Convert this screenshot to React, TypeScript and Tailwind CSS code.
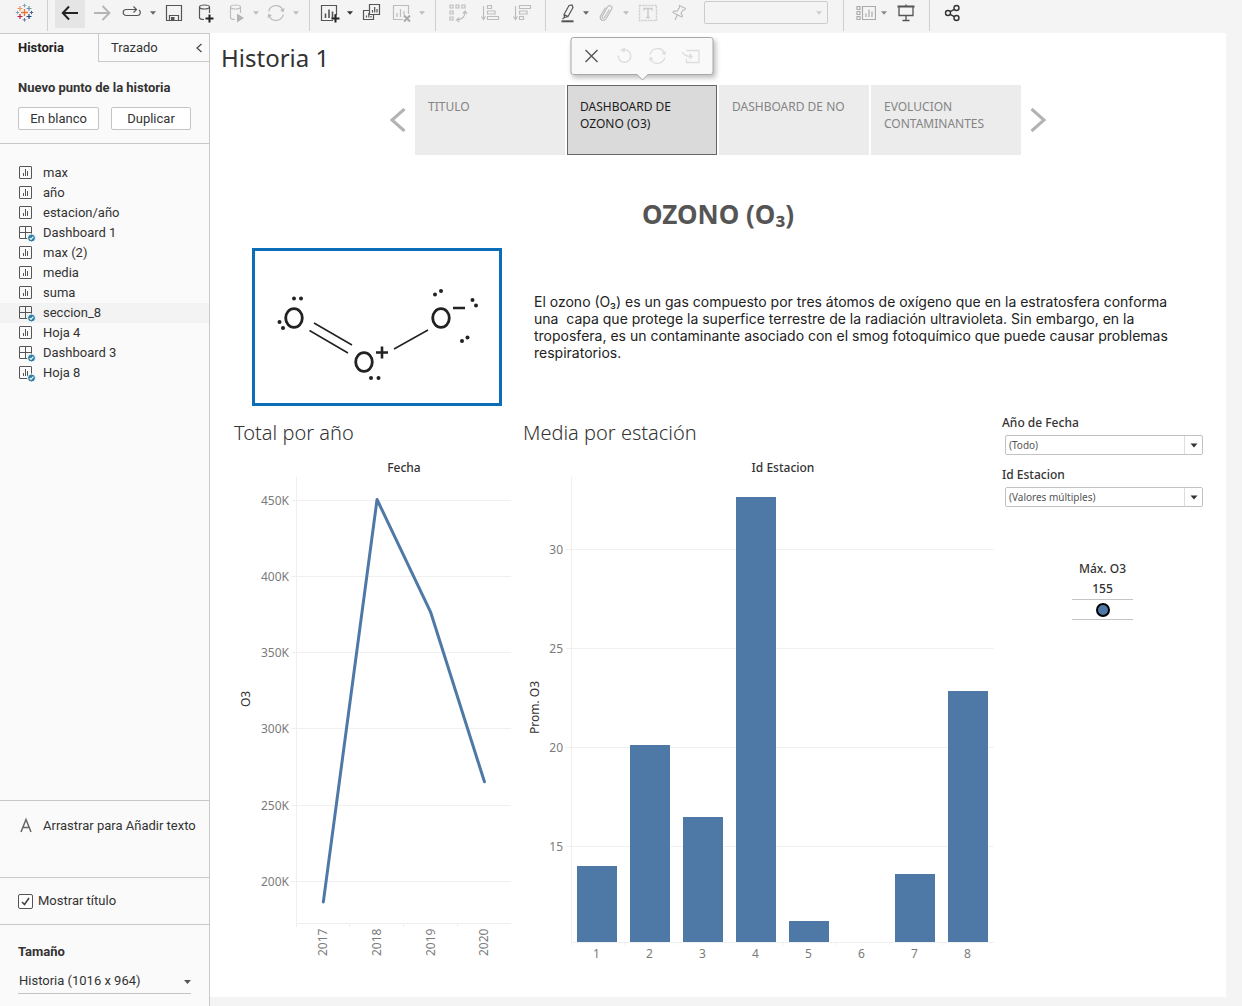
import type { ReactNode } from "react";

const UI = "font-['Roboto',sans-serif]";
const ink = "#555555";
const faint = "#bdbdbd";

function Icon({ children, color = ink, w = 1 }: { children: ReactNode; color?: string; w?: number }) {
  return (
    <svg width="20" height="20" viewBox="0 0 20 20" fill="none" stroke={color} strokeWidth={w} className="shrink-0">
      {children}
    </svg>
  );
}

function Tool({ label, className, children }: { label: string; className: string; children: ReactNode }) {
  return (
    <button type="button" aria-label={label} className={`flex h-7 shrink-0 items-center justify-center pb-0.5 ${className}`}>
      {children}
    </button>
  );
}

function Caret({ color = "#666666" }: { color?: string }) {
  return (
    <svg width="6" height="4" viewBox="0 0 6 4" fill={color} className="shrink-0">
      <path d="M0 0.3H6L3 3.8Z" />
    </svg>
  );
}

function Divider({ className }: { className: string }) {
  return <div className={`h-[31px] w-px shrink-0 bg-[#cfcfcf] ${className}`} />;
}

function Plus({ x, y, r, c, w = 1 }: { x: number; y: number; r: number; c: string; w?: number }) {
  return <path d={`M${x - r} ${y}H${x + r}M${x} ${y - r}V${y + r}`} stroke={c} strokeWidth={w} />;
}

function Database() {
  return (
    <>
      <ellipse cx="8.5" cy="4" rx="5" ry="2" />
      <path d="M3.5 4V14.5C3.5 15.8 5 16.5 8 16.5M13.5 4V10" />
    </>
  );
}

function RefreshShape({ color }: { color: string }) {
  return (
    <>
      <path d="M2.7 8.3A7.5 7.5 0 0 1 16.6 6.5M17.3 11.7A7.5 7.5 0 0 1 3.4 13.5" />
      <path d="M18.6 5L17.6 9.4L14 7.2ZM1.4 15L2.4 10.6L6 12.8Z" fill={color} stroke="none" />
    </>
  );
}

function Toolbar() {
  return (
    <header className="flex h-[33px] shrink-0 items-start overflow-hidden bg-[#f4f4f4]">
      <Tool label="Tableau" className="w-[47px]">
        <Icon>
          <Plus x={10.5} y={9.5} r={3.5} c="#eb762b" w={1.3} />
          <Plus x={6} y={5.5} r={2.5} c="#f0965a" w={1.2} />
          <Plus x={15} y={5.5} r={2.5} c="#6a96ad" w={1.2} />
          <Plus x={6} y={13.5} r={2.5} c="#c9223f" w={1.2} />
          <Plus x={15} y={13.5} r={2.5} c="#1f4b7f" w={1.2} />
          <Plus x={10.5} y={2.5} r={1.8} c="#7fa4b8" />
          <Plus x={10.5} y={16.8} r={1.8} c="#6d77a4" />
          <Plus x={3.5} y={9.5} r={1.7} c="#7fa4b8" />
          <Plus x={17.5} y={9.5} r={1.7} c="#53608f" />
        </Icon>
      </Tool>
      <Divider className="mr-[7px]" />
      <Tool label="Deshacer" className="w-[30px] bg-[#e5e5e5]">
        <Icon color="#222222" w={2}><path d="M18 10H3M9 3.5L2.8 10L9 16.5" /></Icon>
      </Tool>
      <Tool label="Rehacer" className="w-[34px]">
        <Icon color="#b4b4b4" w={1.8}><path d="M2 10H17M10.5 3L17.5 10L10.5 17" /></Icon>
      </Tool>
      <Tool label="Repetir" className="w-[26px]">
        <Icon w={1.2}>
          <path d="M14 6.5H4.2A3 3 0 0 0 4.2 12.500H15.500A3 3 0 0 0 17 7" />
          <path d="M11.500 3.500L14.500 6.500L11.500 9.500" />
        </Icon>
      </Tool>
      <Tool label="Opciones de repetir" className="w-4"><Caret /></Tool>
      <Tool label="Guardar" className="w-[26px]">
        <Icon w={1.2}>
          <path d="M2.5 2.5H17.5V17.5H2.5ZM5.5 17V12.5H14.5V17" />
          <path d="M7 14H10.5V17.5H7Z" fill={ink} stroke="none" />
        </Icon>
      </Tool>
      <Tool label="Nueva fuente de datos" className="w-[38px]">
        <Icon w={1.2}><Database /><Plus x={13.5} y={15.5} r={4} c="#222222" w={2} /></Icon>
      </Tool>
      <Tool label="Actualizaciones automáticas" className="w-6">
        <Icon color={faint} w={1.2}><Database /><path d="M10 10.5L17 15L10 19.5Z" fill="#b4b4b4" stroke="none" /></Icon>
      </Tool>
      <Tool label="Opciones de actualización" className="w-3.5"><Caret color={faint} /></Tool>
      <Tool label="Ejecutar actualización" className="w-[26px]">
        <Icon color={faint} w={1.3}><RefreshShape color={faint} /></Icon>
      </Tool>
      <Tool label="Opciones de ejecución" className="w-3.5"><Caret color={faint} /></Tool>
      <Divider className="mr-1 ml-1.5" />
      <Tool label="Nueva hoja" className="w-8">
        <Icon w={1.2}>
          <path d="M13 17.5H1.5V2.5H16.5V12" />
          <path d="M5.5 15V10.5M9 15V6.5M12.5 15V8.5M15.5 14V11" strokeWidth="1.6" />
          <Plus x={15.5} y={15.5} r={4} c="#222222" w={2} />
        </Icon>
      </Tool>
      <Tool label="Opciones de hoja" className="w-2"><Caret color="#333333" /></Tool>
      <Tool label="Duplicar hoja" className="w-[34px]">
        <Icon w={1.2}>
          <path d="M8.5 1.5H18.5V11.5H8.5ZM8 7.5H2.5V16.5H12.5V12" />
          <path d="M11.5 9.5V7M13.7 9.5V4M16 9.5V6M5.5 14.5V12.5M7.8 14.5V10M10 14.5V13" />
        </Icon>
      </Tool>
      <Tool label="Borrar hoja" className="w-7">
        <Icon color={faint} w={1.2}>
          <path d="M11 16.5H1.5V2.5H16.5V11M5 14V10M8.5 14V6M12 12V8" />
          <path d="M12 12.5L18 18.5M18 12.5L12 18.5" stroke="#aaaaaa" strokeWidth="2" />
        </Icon>
      </Tool>
      <Tool label="Opciones de borrar" className="w-3"><Caret color={faint} /></Tool>
      <Divider className="mr-1.5 ml-[7px]" />
      <Tool label="Intercambiar filas y columnas" className="w-8">
        <Icon color={faint} w={1.2}>
          <path d="M2 2H5V5H2ZM8 2H11V5H8ZM14 2H17V5H14ZM2 8H5V11H2ZM2 14H5V17H2ZM17 9C17 14 14 16.5 9 17M15 10.5L17.2 8L19 11M11.5 14.5L8.5 17L11.5 19" />
        </Icon>
      </Tool>
      <Tool label="Orden ascendente" className="w-8">
        <Icon color={faint} w={1.2}>
          <path d="M3.5 3V16M1.5 13.5L3.5 16.5L5.5 13.5M7.5 2.5H11.5V5.5H7.5ZM7.5 8H15V11H7.5ZM7.5 13.5H18.5V16.5H7.5Z" />
        </Icon>
      </Tool>
      <Tool label="Orden descendente" className="w-8">
        <Icon color={faint} w={1.2}>
          <path d="M3.5 3V16M1.5 13.5L3.5 16.5L5.5 13.5M7.5 2.5H18.5V5.5H7.5ZM7.5 8H15V11H7.5ZM7.5 13.5H11.5V16.5H7.5Z" />
        </Icon>
      </Tool>
      <Divider className="mr-2 ml-[7px]" />
      <Tool label="Resaltar" className="w-7">
        <Icon w={1.2}>
          <path d="M11 2.5L14 2L15 4.5L10 13.500L6.5 14.5L6 11.5ZM6 11.5L10 13.500M6.5 14.5L4.5 16" />
          <path d="M3.500 18.3H15.500" strokeWidth="2" />
        </Icon>
      </Tool>
      <Tool label="Opciones de resaltado" className="w-2"><Caret /></Tool>
      <Tool label="Agrupar" className="w-8">
        <Icon color={faint} w={1.2}>
          <path d="M13.5 6.5L8.5 14.5C7.5 16 5.5 15 6.3 13.2L11.5 4C13 1.5 17 3.2 15.6 6.2L10 15.8C8 19 3 17 4.5 13L9.5 4.5" />
        </Icon>
      </Tool>
      <Tool label="Opciones de agrupar" className="w-2"><Caret color={faint} /></Tool>
      <Tool label="Mostrar etiquetas" className="w-9">
        <Icon color="#cccccc" w={1.4}>
          <path d="M1.5 2.5H18.5V17.5H1.5Z" strokeDasharray="2 1" />
          <path d="M6 7.5V5.5H14V7.5M10 5.5V14.5M8 14.5H12" strokeWidth="1.6" />
        </Icon>
      </Tool>
      <Tool label="Fijar" className="w-[26px]">
        <Icon color={faint} w={1.2}>
          <path d="M10.500 2.5L16.500 5.500L15.500 7L14 7L12 10.500L13.500 13L12.800 14L4 9.500L4.800 8.200L8 8.200L10.500 4.500ZM8.200 12L6 17" />
        </Icon>
      </Tool>
      <div className="relative mt-px ml-3 h-[23px] w-[124px] shrink-0">
        <select aria-label="Ajuste" disabled className="block h-full w-full appearance-none rounded-xs border border-[#cccccc] bg-[#f4f4f4] opacity-100" />
        <span className="pointer-events-none absolute inset-y-0 right-1.5 flex items-center"><Caret color="#cccccc" /></span>
      </div>
      <Divider className="mr-2 ml-[15px]" />
      <Tool label="Mostrar tarjetas" className="w-7">
        <Icon color="#aaaaaa" w={1.2}>
          <path d="M1 3.5H4V6.5H1ZM1 8.5H4V11.5H1ZM1 13.5H4V16.5H1ZM6.5 3.5H19.5V16.5H6.5ZM10 14V10.5M13 14V6.5M16 14V8.5" />
        </Icon>
      </Tool>
      <Tool label="Opciones de tarjetas" className="w-2"><Caret color="#888888" /></Tool>
      <Tool label="Modo de presentación" className="w-9">
        <Icon w={1.3}>
          <path d="M1.5 3.5H18.5" strokeWidth="2" />
          <path d="M3 4V12.5H17V4M10 12.5V17.5M6.5 17.5H13.5M10 1.5V3" />
        </Icon>
      </Tool>
      <Divider className="mr-2 ml-[5px]" />
      <Tool label="Compartir" className="w-7">
        <Icon color="#333333" w={1.4}>
          <circle cx="6" cy="10" r="2.500" /><circle cx="14.5" cy="5" r="2.500" /><circle cx="14.5" cy="15" r="2.500" />
          <path d="M8.200 8.700L12.300 6.300M8.200 11.300L12.300 13.700" />
        </Icon>
      </Tool>
    </header>
  );
}

type Kind = "sheet" | "dashboard" | "sheetUsed";
const sheets: { name: string; kind: Kind }[] = [
  { name: "max", kind: "sheet" },
  { name: "año", kind: "sheet" },
  { name: "estacion/año", kind: "sheet" },
  { name: "Dashboard 1", kind: "dashboard" },
  { name: "max (2)", kind: "sheet" },
  { name: "media", kind: "sheet" },
  { name: "suma", kind: "sheet" },
  { name: "seccion_8", kind: "dashboard" },
  { name: "Hoja 4", kind: "sheet" },
  { name: "Dashboard 3", kind: "dashboard" },
  { name: "Hoja 8", kind: "sheetUsed" },
];

function SheetIcon({ kind }: { kind: Kind }) {
  return (
    <svg width="18" height="18" viewBox="0 0 18 18" fill="none" stroke="#555555" className="shrink-0">
      <rect x="1.5" y="2.5" width="12" height="12" rx="0.5" />
      {kind === "dashboard" ? <path d="M7.5 2.5V14.5M1.5 8.5H13.5" /> : <path d="M5.5 12V9M7.5 12V5M9.5 12V7" />}
      {kind !== "sheet" && (
        <>
          <circle cx="13.5" cy="14" r="4" fill="#2e7fa3" stroke="#fafafa" />
          <path d="M11.7 14L13 15.400L15.4 12.700" stroke="#ffffff" strokeWidth="1.1" />
        </>
      )}
    </svg>
  );
}

function Sidebar() {
  return (
    <aside className={`flex w-[210px] shrink-0 flex-col border-t border-r border-[#c9c9c9] bg-[#fafafa] text-[13px] leading-4 text-[#333333] ${UI}`}>
      <div className="flex h-7 shrink-0">
        <button type="button" className="w-[98px] pl-[18px] text-left font-bold text-[#222222]">Historia</button>
        <div className="flex flex-1 items-center justify-between border-b border-l border-[#c9c9c9] pr-1.5 pl-3">
          <button type="button">Trazado</button>
          <button type="button" aria-label="Contraer">
            <svg width="8" height="10" viewBox="0 0 8 10" fill="none" stroke="#444444" strokeWidth="1.2"><path d="M6.5 1L2 5L6.5 9" /></svg>
          </button>
        </div>
      </div>
      <section className="shrink-0 border-b border-[#c9c9c9] px-[18px] pt-[18px] pb-[13px]">
        <h2 className="font-bold">Nuevo punto de la historia</h2>
        <div className="mt-[11px] flex gap-3">
          <button type="button" className="h-[23px] w-[81px] rounded-xs border border-[#c4c4c4] bg-white">En blanco</button>
          <button type="button" className="h-[23px] w-20 rounded-xs border border-[#c4c4c4] bg-white">Duplicar</button>
        </div>
      </section>
      <ul className="flex-1 pt-[19px]">
        {sheets.map((s) => (
          <li key={s.name} className={s.name === "seccion_8" ? "bg-[#f3f3f3]" : ""}>
            <button type="button" className="flex h-5 w-full items-center gap-[7px] pl-[18px]">
              <SheetIcon kind={s.kind} />
              <span>{s.name}</span>
            </button>
          </li>
        ))}
      </ul>
      <div className="flex h-[77px] items-start gap-[11px] border-t border-[#c9c9c9] pt-4 pl-5">
        <svg width="12" height="16" viewBox="0 0 12 16" fill="none" stroke="#666666" strokeWidth="1.5"><path d="M1 15L6 2.5L11 15M2.8 10.5H9.2" /></svg>
        <span className="pt-px whitespace-nowrap">Arrastrar para Añadir texto</span>
      </div>
      <div className="flex h-[47px] items-center border-t border-[#c9c9c9] pl-[18px]">
        <label className="flex items-center gap-[5px]">
          <span className="relative flex">
            <input type="checkbox" defaultChecked className="peer size-[15px] appearance-none rounded-xs border border-[#555555] bg-white" />
            <svg width="15" height="15" viewBox="0 0 15 15" fill="none" stroke="#444444" strokeWidth="1.6" className="pointer-events-none absolute inset-0 hidden peer-checked:block"><path d="M4 8L6.5 10.5L11 4" /></svg>
          </span>
          Mostrar título
        </label>
      </div>
      <div className="h-[82px] border-t border-[#c9c9c9] px-[18px] pt-[19px]">
        <label htmlFor="size" className="block font-bold">Tamaño</label>
        <div className="relative mt-[9px]">
          <select id="size" className="block h-[25px] w-full appearance-none border-b border-[#c4c4c4] bg-transparent pl-px">
            <option>Historia (1016 x 964)</option>
          </select>
          <span className="pointer-events-none absolute inset-y-0 right-0 flex items-center">
            <svg width="7" height="4" viewBox="0 0 7 4" fill="#555555"><path d="M0 0H7L3.500 4Z" /></svg>
          </span>
        </div>
      </div>
    </aside>
  );
}

const points = ["TITULO", "DASHBOARD DE OZONO (O3)", "DASHBOARD DE NO", "EVOLUCION CONTAMINANTES"];

function PointMenu() {
  return (
    <div className="absolute bottom-20 left-1/2 flex h-[38px] w-[143px] -translate-x-1/2 items-center gap-[13px] rounded-[3px] border border-[#a8a8a8] bg-[#f9f9f9] pl-[10px] shadow-[2px_3px_5px_rgba(0,0,0,0.25)]">
      <button type="button" aria-label="Eliminar"><Icon color="#555555" w={1.4}><path d="M4 4L16 16M16 4L4 16" /></Icon></button>
      <button type="button" aria-label="Revertir">
        <Icon color="#dddddd" w={1.4}><path d="M8 4A6.3 6.3 0 1 1 3.7 9.5" /><path d="M10.5 1.5L5.5 4L10 6.5Z" fill="#dddddd" stroke="none" /></Icon>
      </button>
      <button type="button" aria-label="Actualizar"><Icon color="#dddddd" w={1.4}><RefreshShape color="#dddddd" /></Icon></button>
      <button type="button" aria-label="Guardar como nuevo">
        <Icon color="#dddddd" w={1.3}><path d="M6 4.5H18.5V16.5H6V13M2 6C3 9 5 10.5 11 10.5M9 8L11.5 10.5L9 13" /></Icon>
      </button>
      <svg width="16" height="8" viewBox="0 0 16 8" className="absolute top-full left-1/2 -translate-x-1/2">
        <path d="M2 0L8 6L14 0" fill="#f9f9f9" stroke="#a0a0a0" />
      </svg>
    </div>
  );
}

function Navigator() {
  return (
    <nav className="flex items-center justify-center gap-2 text-[12px] leading-[17px]">
      <button type="button" aria-label="Anterior">
        <svg width="18" height="26" viewBox="0 0 18 26" fill="none" stroke="#b3b3b3" strokeWidth="3"><path d="M15.5 2L3 13L15.5 24" /></svg>
      </button>
      <div className="flex gap-0.5">
        {points.map((p, i) => (
          <div key={p} className="relative h-[70px] w-[150px]">
            <button
              type="button"
              className={
                i === 1
                  ? "flex h-full w-full items-start border border-[#666666] bg-[#dadada] px-3 pt-3 text-left text-[#1c1c1c]"
                  : "flex h-full w-full items-start bg-[#ececec] px-[13px] pt-[13px] text-left text-[#848484]"
              }
            >
              {p}
            </button>
            {i === 1 && <PointMenu />}
          </div>
        ))}
      </div>
      <button type="button" aria-label="Siguiente">
        <svg width="18" height="26" viewBox="0 0 18 26" fill="none" stroke="#b3b3b3" strokeWidth="3"><path d="M2.5 2L15 13L2.5 24" /></svg>
      </button>
    </nav>
  );
}

const electrons = [
  [40, 48], [47, 48], [25.5, 71.5], [29, 77.5], [181, 44], [187, 40.5], [218.5, 49.5], [222, 55], [208, 90.5], [213.5, 87], [117, 127.5], [124.5, 127.5],
];

function Molecule() {
  return (
    <svg viewBox="0 0 244 152" className="h-full w-full" fill="none" stroke="#222222" strokeWidth="1.5">
      <g strokeWidth="2.8">
        <ellipse cx="39" cy="67" rx="8.3" ry="9.3" />
        <ellipse cx="109" cy="111" rx="8.3" ry="9.3" />
        <ellipse cx="186" cy="67" rx="8.3" ry="9.3" />
        <path d="M121 101.5H133M127 95.5V107.5M198 57H210" strokeWidth="2.6" />
      </g>
      <path d="M59 72L97 94M54.5 79.5L93 102M139 98L173 79" />
      {electrons.map(([x, y]) => <circle key={`${x}-${y}`} cx={x - 1} cy={y - 0.5} r="2" fill="#222222" stroke="none" />)}
    </svg>
  );
}

const yearly = [
  { year: 2017, total: 186.3 },
  { year: 2018, total: 450 },
  { year: 2019, total: 376 },
  { year: 2020, total: 265 },
];

function LineChart() {
  const x = (i: number) => 62.5 + 53.7 * (i + 0.5);
  const y = (v: number) => 426 - (v - 200) * 1.526;
  return (
    <svg viewBox="0 0 278 510" className="w-full text-[12px]" role="img" aria-label="Total por año">
      <text x="170" y="17" textAnchor="middle" fill="#333333" fontWeight="500">Fecha</text>
      {[450, 400, 350, 300, 250, 200].map((v) => (
        <g key={v}>
          <path d={`M57 ${Math.round(y(v)) + 0.5}H277`} stroke="#f0f0f0" />
          <text x="55" y={y(v) + 5} textAnchor="end" fill="#7b7b7b">{v}K</text>
        </g>
      ))}
      <path d="M62.5 22V472M62 468.5H277M115.5 468V472M169.5 468V472M223.5 468V472" stroke="#efefef" />
      <polyline points={yearly.map((d, i) => `${x(i)},${y(d.total)}`).join(" ")} fill="none" stroke="#4e79a7" strokeWidth="3" strokeLinecap="round" strokeLinejoin="round" />
      {yearly.map((d, i) => (
        <text key={d.year} transform={`translate(${x(i) + 4} 501) rotate(-90)`} fill="#7b7b7b">{d.year}</text>
      ))}
      <text transform="translate(16 252) rotate(-90)" fill="#333333">O3</text>
    </svg>
  );
}

const stations = [13.95, 20.1, 16.45, 32.6, 11.2, 10.2, 13.56, 22.8];

function BarChart() {
  const x = (i: number) => 48 + 53 * (i + 0.5);
  const y = (v: number) => 391 - (v - 15) * 19.8;
  return (
    <svg viewBox="0 0 472 510" className="w-full text-[12px]" role="img" aria-label="Media por estación">
      <text x="260" y="17" textAnchor="middle" fill="#333333" fontWeight="500">Id Estacion</text>
      {[30, 25, 20, 15].map((v) => (
        <g key={v}>
          <path d={`M43 ${Math.round(y(v)) + 0.5}H471`} stroke="#f0f0f0" />
          <text x="40" y={y(v) + 5} textAnchor="end" fill="#7b7b7b">{v}</text>
        </g>
      ))}
      <path d="M48.5 22V490M48 487.5H471" stroke="#efefef" />
      {stations.map((v, i) => (
        <g key={i}>
          <path d={`M${Math.round(x(i) + 26)}.5 487V490`} stroke="#efefef" />
          {v > 11 && <rect x={Math.round(x(i) - 20.5)} y={Math.floor(y(v))} width="40" height={487 - Math.floor(y(v))} fill="#4e79a7" />}
          <text x={x(i) - 1} y="503" textAnchor="middle" fill="#7b7b7b">{i + 1}</text>
        </g>
      ))}
      <text transform="translate(16 279) rotate(-90)" fill="#333333">Prom. O3</text>
    </svg>
  );
}

function Filter({ id, label, value }: { id: string; label: string; value: string }) {
  return (
    <div className="h-[52px]">
      <label htmlFor={id} className="block text-[12px] leading-4 font-medium text-[#333333]">{label}</label>
      <div className="relative mt-1 ml-[3px] h-5">
        <select id={id} className="block h-full w-full appearance-none rounded-xs border border-[#c2c2c2] bg-white pl-[3px] text-[10px] text-[#555555]">
          <option>{value}</option>
        </select>
        <span className="pointer-events-none absolute inset-y-px right-px flex w-[18px] items-center justify-center border-l border-[#dddddd]">
          <svg width="8" height="5" viewBox="0 0 8 5" fill="#333333"><path d="M0.5 0.5H7.5L4 4.5Z" /></svg>
        </span>
      </div>
    </div>
  );
}

export default function App() {
  return (
    <div className="flex min-h-screen flex-col bg-[#f4f4f4] font-['Noto_Sans',sans-serif] text-[#333333]">
      <Toolbar />
      <div className="flex flex-1">
        <Sidebar />
        <main className="mr-4 mb-[9px] flex-1 bg-white">
          <h1 className="h-[52px] pt-[9px] pl-[11px] text-[24px] leading-8">Historia 1</h1>
          <Navigator />
          <h2 className="pt-[41px] pb-4 text-center text-[26px] leading-9 font-bold text-[#555555]">
            OZONO (O₃)
          </h2>
          <div className="flex items-center px-[42px]">
            <div className="h-[158px] w-[250px] shrink-0 border-[3px] border-[#0b6db7]"><Molecule /></div>
            <p className="ml-8 flex-1 font-['Inter',sans-serif] text-[14px] leading-[17px] whitespace-pre-wrap text-[#222222]">
              {"El ozono (O₃) es un gas compuesto por tres átomos de oxígeno que en la estratosfera conforma una  capa que protege la superfice terrestre de la radiación ultravioleta. Sin embargo, en la troposfera, es un contaminante asociado con el smog fotoquímico que puede causar problemas respiratorios."}
            </p>
          </div>
          <div className="grid grid-cols-[289fr_479fr_224fr] pt-[9px] pl-6">
            <section className="pt-[3px] pr-[11px]">
              <h3 className="h-[37px] text-[20px] leading-[30px] font-light">Total por año</h3>
              <LineChart />
            </section>
            <section className="pt-[3px] pr-[7px]">
              <h3 className="h-[37px] text-[20px] leading-[30px] font-light">Media por estación</h3>
              <BarChart />
            </section>
            <section className="pr-[23px]">
              <Filter id="year" label="Año de Fecha" value="(Todo)" />
              <Filter id="station" label="Id Estacion" value="(Valores múltiples)" />
              <div className="mx-auto mt-10 w-[61px] text-center text-[12px] leading-5 font-medium">
                <div className="whitespace-nowrap">Máx. O3</div>
                <div>155</div>
                <div className="flex h-[21px] items-center justify-center border-y border-[#c4c4c4]">
                  <svg width="16" height="16" viewBox="0 0 16 16"><circle cx="8" cy="8" r="6" fill="#4e79a7" stroke="#000000" strokeWidth="2" /></svg>
                </div>
              </div>
            </section>
          </div>
        </main>
      </div>
    </div>
  );
}
